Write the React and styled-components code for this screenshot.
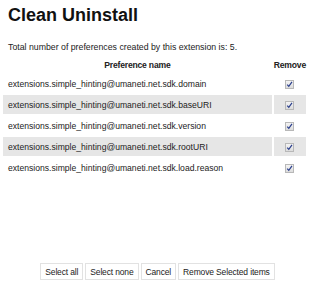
import React from 'react';
import styled, { createGlobalStyle } from 'styled-components';

const GlobalStyle = createGlobalStyle`
  body {
    margin: 0;
    background: #fff;
    font-family: "Liberation Sans", Arial, sans-serif;
    color: #222;
  }
`;

const Page = styled.div`
  width: 313px;
  height: 288px;
  padding: 5px 0 0 0;
  box-sizing: border-box;
  display: flex;
  flex-direction: column;
`;

const Title = styled.h1`
  font-size: 18px;
  font-weight: bold;
  margin: 0 0 0 8px;
  color: #111;
`;

const Summary = styled.p`
  font-size: 8.75px;
  margin: 16px 0 0 8px;
`;

const Table = styled.table`
  margin: 4px 0 0 1px;
  width: 307px;
  border-spacing: 2px;
  font-size: 8.6px;
`;

const HeadCell = styled.th`
  font-weight: bold;
  height: 14px;
  padding: 0;
  text-align: center;
  letter-spacing: -0.2px;
`;

const Cell = styled.td`
  height: 19px;
  padding: 0 0 0 5px;
  background: ${p => (p.$shaded ? '#e6e6e6' : 'transparent')};
  text-align: ${p => (p.$center ? 'center' : 'left')};
  ${p => p.$center && 'padding: 0; width: 32px;'}
`;

const Check = styled.span`
  display: inline-block;
  width: 7px;
  height: 7px;
  border: 1px solid #b8b8b8;
  background: linear-gradient(#f4f4f4, #dcdcdc);
  vertical-align: middle;
  position: relative;
`;

const Tick = styled.svg`
  position: absolute;
  left: 0;
  top: 0;
`;

const Buttons = styled.div`
  margin-top: auto;
  margin-bottom: 8px;
  display: flex;
  justify-content: center;
  gap: 2px;
  padding-left: 2px;
`;

const Button = styled.button`
  font-family: inherit;
  font-size: 8.5px;
  letter-spacing: -0.15px;
  color: #222;
  background: #fff;
  border: 1px solid #e2e2e2;
  height: 17px;
  padding: 0 4px;
`;

const prefs = ['domain', 'baseURI', 'version', 'rootURI', 'load.reason'];

export default function App() {
  return (
    <Page>
      <GlobalStyle />
      <Title>Clean Uninstall</Title>
      <Summary>Total number of preferences created by this extension is: {prefs.length}.</Summary>
      <Table>
        <thead>
          <tr>
            <HeadCell>Preference name</HeadCell>
            <HeadCell>Remove</HeadCell>
          </tr>
        </thead>
        <tbody>
          {prefs.map((p, i) => (
            <tr key={p}>
              <Cell $shaded={i % 2 === 1}>extensions.simple_hinting@umaneti.net.sdk.{p}</Cell>
              <Cell $shaded={i % 2 === 1} $center>
                <Check>
                  <Tick width="7" height="7" viewBox="0 0 7 7">
                    <path d="M1.2 3.6 L2.8 5.4 L6 0.8" fill="none" stroke="#2b3f8c" strokeWidth="1.2" />
                  </Tick>
                </Check>
              </Cell>
            </tr>
          ))}
        </tbody>
      </Table>
      <Buttons>
        <Button>Select all</Button>
        <Button>Select none</Button>
        <Button>Cancel</Button>
        <Button>Remove Selected items</Button>
      </Buttons>
    </Page>
  );
}
